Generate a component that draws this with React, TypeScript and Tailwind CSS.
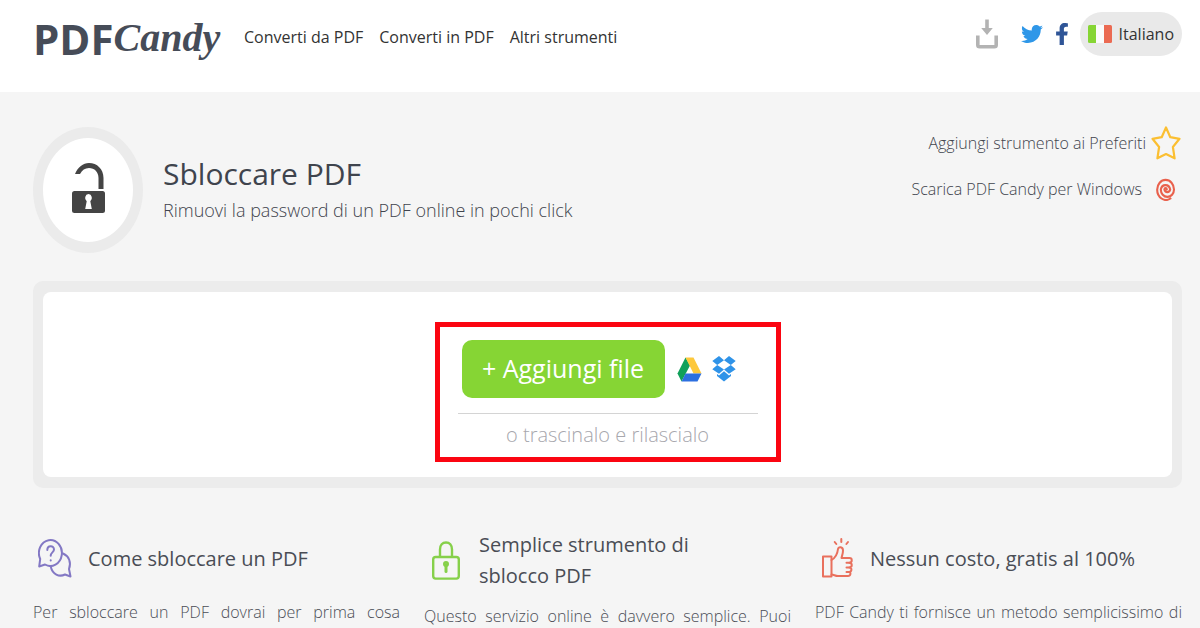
import type { ReactNode } from "react";
import { FaFacebookF, FaTwitter } from "react-icons/fa";

function DownloadIcon() {
  return (
    <svg width="22" height="30" viewBox="0 0 22 30" fill="none" aria-hidden="true">
      <path d="M1.800 16.500V26q0 1.800 1.800 1.800h14.800q1.800 0 1.800-1.800v-9.500" stroke="#b3b3b3" strokeWidth="3.600" />
      <path d="M9.200 0.500h3.600v8.500h4L11 16 5.200 9h4z" fill="#b3b3b3" />
    </svg>
  );
}

function ItalianFlag() {
  return (
    <svg width="24" height="18" viewBox="0 0 24 18" aria-hidden="true">
      <path d="M1.500 0H8v18H1.500Q0 18 0 16.500v-15Q0 0 1.500 0z" fill="#86d534" />
      <path d="M8 0h8v18H8z" fill="#fbfbfb" />
      <path d="M16 0h6.500Q24 0 24 1.500v15q0 1.500-1.500 1.500H16z" fill="#eb6a52" />
    </svg>
  );
}

function OpenPadlock() {
  return (
    <svg width="33" height="50" viewBox="0 0 33 50" aria-hidden="true">
      <path d="M3 11C6 4 11 0 17 0c8 0 14.500 6 14.500 15v11H26.500V15c0-6-4-10-9.500-10C13 5 10 7 8 11z" fill="#444" />
      <rect y="28" width="33" height="22" rx="2.500" fill="#444" />
      <path d="M16.500 31a3.600 4 0 0 1 1.800 7.300L19.800 46h-6.600l1.500-7.700A3.600 4 0 0 1 16.500 31z" fill="#fff" />
    </svg>
  );
}

function StarIcon() {
  return (
    <svg width="30" height="34" viewBox="0 0 30 34" fill="none" aria-hidden="true">
      <path
        d="M15 1.500l4.300 9.700 9.200 1.600-6.600 8.200 1.700 11.300L15 28l-8.600 4.300L8.100 21l-6.600-8.200 9.200-1.600z"
        stroke="#fbbf32"
        strokeWidth="2.200"
        strokeLinejoin="round"
      />
    </svg>
  );
}

function CandySwirl() {
  return (
    <svg width="20" height="24" viewBox="0 0 20 24" fill="none" stroke="#e9614d" strokeLinecap="round" aria-hidden="true">
      <path
        d="M10.800 12.500A1.200 1.400 0 0 0 8.400 12.500A3 3.500 0 0 0 14.200 12.500A4.800 5.500 0 0 0 4.800 12.500A6.600 7.400 0 0 0 18 12.500A8.400 9.600 0 0 0 1.200 12.500A8.800 10 0 0 0 14.500 21.500"
        strokeWidth="2.100"
      />
    </svg>
  );
}

function DriveIcon() {
  return (
    <svg width="25" height="25" viewBox="0 0 25 25" aria-hidden="true">
      <path d="M8.500 0.500L0.500 16.500l4 8L13 8.500z" fill="#10a05a" />
      <path d="M8.500 0.500h8l8 16h-8z" fill="#fdc83c" />
      <path d="M8.500 16.500h16l-4 8h-16z" fill="#2c6fe0" />
    </svg>
  );
}

function DropboxIcon() {
  return (
    <svg width="24" height="26" viewBox="0 0 24 26" fill="#2f93e8" aria-hidden="true">
      <path d="M7 0l5 4.300L5.200 9 0.300 5zM17 0l6.700 5-4.900 4L12 4.300zM0.300 13.200L5.200 9l6.800 4.600L7 17.800zM18.800 9l4.900 4.200-6.700 4.600-5-4.200z" />
      <path d="M12 15.200l5 4.300 2-1.500v1.900L12 25.500l-7-5.600V18l2 1.500z" />
    </svg>
  );
}

function QuestionBubbles() {
  return (
    <svg width="34" height="39" viewBox="0 0 34 39" fill="none" stroke="#8378c4" strokeWidth="2" strokeLinejoin="round" strokeLinecap="round" aria-hidden="true">
      <path d="M1.200 27.500L2.200 20A11.500 13 0 1 1 7 25.500z" />
      <path d="M25 14.500c6 2.500 8.500 9 6 15.500l1.500 7.500-5.500-2c-6 3-12.500-.5-14-7" />
      <path d="M9.300 11c0-5 6.700-5 6.700-.6 0 3-3.300 3-3.300 6.400" />
      <path d="M12.700 21.300v.3" />
    </svg>
  );
}

function ClosedPadlock() {
  return (
    <svg width="28" height="39" viewBox="0 0 28 39" fill="none" stroke="#86d04a" strokeWidth="2.400" aria-hidden="true">
      <rect x="1.200" y="16" width="25.600" height="21.600" rx="2.500" />
      <path d="M8 16V8.500C8 4 10.500 1.500 14 1.500S20 4 20 8.500V16" />
      <path d="M14 23.500v7" strokeWidth="3" strokeLinecap="round" />
      <circle cx="14" cy="23" r="1.800" />
    </svg>
  );
}

function ThumbsUp() {
  return (
    <svg width="31" height="40" viewBox="0 0 31 40" fill="none" stroke="#e9705d" strokeWidth="2" strokeLinejoin="round" strokeLinecap="round" aria-hidden="true">
      <path d="M1 18.500h8.500v20H1z" />
      <path d="M9.500 22c4.500-2.500 6-6.500 6.500-11 .4-2.500 5-2.500 5 1.500 0 3-1 5-1.500 7.500h8c3 0 3 4.500 0 4.700 3 .2 3 4.500 0 4.700 2.600.2 2.600 4.300-.3 4.500 2 .4 1.600 4.100-1.200 4.100H16c-3 0-4-1.500-6.500-1.500" />
      <path d="M24.500 24.700h3M24.500 29.400h3M24.500 33.900h2.700" />
      <path d="M19.300 1v3M12.700 4l1.600 2M26 4l-1.600 2" />
    </svg>
  );
}

function Feature({ icon, title, children }: { icon: ReactNode; title: string; children: ReactNode }) {
  return (
    <article>
      <div className="flex min-h-[58px] items-center gap-[11px]">
        <div className="flex w-11 shrink-0 justify-center">{icon}</div>
        <h2 className="pr-10 text-xl leading-[31px] text-[#4a4d55]">{title}</h2>
      </div>
      <p className="mt-3 text-justify text-base leading-[27px] font-light text-[#4a4d55] [text-align-last:justify]">
        {children}
      </p>
    </article>
  );
}

export default function App() {
  return (
    <div className="min-h-screen bg-[#f5f5f5] font-['Open_Sans','Noto_Sans',sans-serif] text-[#3f444d]">
      <header className="flex h-[92px] items-start justify-between bg-white pr-[18px] pl-[33px]">
        <div className="flex">
          <a href="#" className="flex h-[76px] w-[211px] items-center whitespace-nowrap text-[#464c58]">
            <span className="text-[42px] font-bold">PDF</span>
            <span className="font-['Liberation_Serif',serif] text-[40px] font-bold italic">Candy</span>
          </a>
          <nav className="flex h-[74px] items-center gap-4 text-base whitespace-nowrap text-[#333]">
            <a href="#">Converti da PDF</a>
            <a href="#">Converti in PDF</a>
            <a href="#">Altri strumenti</a>
          </nav>
        </div>
        <div className="flex h-[68px] items-center">
          <a href="#" aria-label="Scarica" className="mr-[23px]">
            <DownloadIcon />
          </a>
          <a href="#" aria-label="Twitter" className="mr-2 text-[#2f97e8]">
            <FaTwitter size={22} />
          </a>
          <a href="#" aria-label="Facebook" className="mr-[7px] text-[#2f5597]">
            <FaFacebookF size={22} />
          </a>
          <button type="button" className="flex h-11 items-center gap-[7px] rounded-full bg-[#e9e9e9] px-2 text-base text-[#333]">
            <ItalianFlag />
            Italiano
          </button>
        </div>
      </header>

      <main className="pr-[18px] pl-[33px]">
        <section className="flex items-start justify-between pt-[35px]">
          <div className="flex items-center gap-5">
            <div className="flex h-[126px] w-[110px] items-center justify-center rounded-[50%] border-10 border-y-11 border-[#ebebeb] bg-white pb-1">
              <OpenPadlock />
            </div>
            <div>
              <h1 className="text-[30px] leading-10">Sbloccare PDF</h1>
              <p className="text-lg leading-8 font-light">Rimuovi la password di un PDF online in pochi click</p>
            </div>
          </div>
          <div className="flex flex-col items-end text-base font-light whitespace-nowrap">
            <a href="#" className="flex h-8 items-center gap-[5px] pr-px">
              Aggiungi strumento ai Preferiti
              <StarIcon />
            </a>
            <a href="#" className="mt-3.5 flex h-8 items-center gap-3.5 pr-1.5">
              Scarica PDF Candy per Windows
              <CandySwirl />
            </a>
          </div>
        </section>

        <section className="mt-7 rounded-[10px] bg-[#ececec] px-[10px] py-[11px]">
          <div className="flex justify-center rounded-lg bg-white pt-[30px] pb-[15px]">
            <div className="border-[5px] border-[#fb0511] px-[18px] pt-[13px] pb-[7px]">
              <div className="flex w-[300px] items-center border-b border-[#d4d4d4] pb-[15px] pl-1">
                <button type="button" className="h-[58px] w-[203px] rounded-[10px] bg-[#86d534] text-[25px] whitespace-nowrap text-white">
                  + Aggiungi file
                </button>
                <a href="#" aria-label="Google Drive" className="ml-3">
                  <DriveIcon />
                </a>
                <a href="#" aria-label="Dropbox" className="ml-2.5">
                  <DropboxIcon />
                </a>
              </div>
              <p className="pt-1.5 text-center text-xl leading-[30px] font-light text-[#a7a7ad]">o trascinalo e rilascialo</p>
            </div>
          </div>
        </section>

        <section className="grid grid-cols-3 gap-6 pt-[41px]">
          <Feature icon={<QuestionBubbles />} title="Come sbloccare un PDF">
            Per sbloccare un PDF dovrai per prima cosa
          </Feature>
          <Feature icon={<ClosedPadlock />} title="Semplice strumento di sblocco PDF">
            Questo servizio online è davvero semplice. Puoi
          </Feature>
          <Feature icon={<ThumbsUp />} title="Nessun costo, gratis al 100%">
            PDF Candy ti fornisce un metodo semplicissimo di
          </Feature>
        </section>
      </main>
    </div>
  );
}
